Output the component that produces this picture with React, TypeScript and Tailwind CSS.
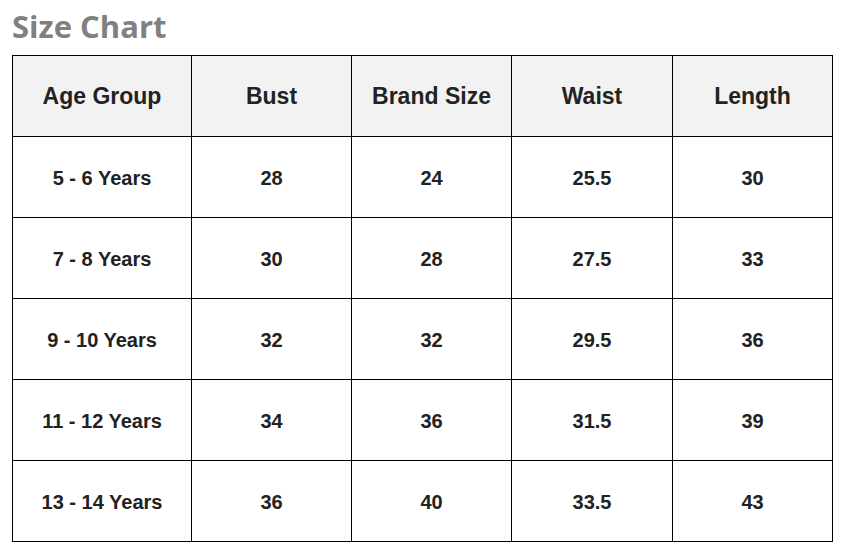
import React from "react";

const headers = ["Age Group", "Bust", "Brand Size", "Waist", "Length"];
const rows = [
  ["5 - 6 Years", "28", "24", "25.5", "30"],
  ["7 - 8 Years", "30", "28", "27.5", "33"],
  ["9 - 10 Years", "32", "32", "29.5", "36"],
  ["11 - 12 Years", "34", "36", "31.5", "39"],
  ["13 - 14 Years", "36", "40", "33.5", "43"],
];

export default function App() {
  return (
    <div className="w-[854px] h-[554px] bg-white overflow-hidden">
      <div
        className="pl-3 pt-[5px] text-[31px] leading-[42px] font-bold text-[#808080]"
        style={{ fontFamily: '"Open Sans", "Noto Sans", sans-serif' }}
      >
        Size Chart
      </div>
      <div
        className="ml-3 mt-2 grid grid-cols-[179px_160px_160px_161px_160px] w-[821px] border-l border-t border-black text-[#222222] font-bold"
        style={{ fontFamily: '"Liberation Sans", Arial, sans-serif' }}
      >
        {headers.map((h) => (
          <div
            key={h}
            className="h-[81px] flex items-center justify-center border-r border-b border-black bg-[#f2f2f2] text-[23px]"
          >
            {h}
          </div>
        ))}
        {rows.map((r, i) =>
          r.map((c, j) => (
            <div
              key={`${i}-${j}`}
              className="h-[81px] pt-[2px] flex items-center justify-center border-r border-b border-black text-[20px]"
            >
              {c}
            </div>
          ))
        )}
      </div>
    </div>
  );
}
